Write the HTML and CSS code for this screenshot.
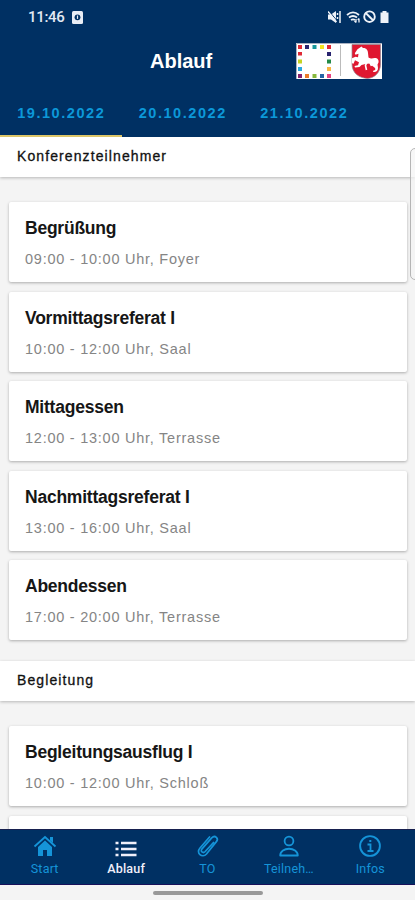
FILE: index.html
```html
<!DOCTYPE html>
<html lang="de">
<head>
<meta charset="utf-8">
<meta name="viewport" content="width=device-width">
<title>Ablauf</title>
<link rel="stylesheet" href="styles.css">
</head>
<body>
<div class="app">
  <header class="header">
    <div class="status">
      <span class="clock">11:46</span>
      <svg class="status-app" width="11" height="13" viewBox="0 0 11 13"><rect width="11" height="13" rx="1.5" fill="#e9edf5"/><circle cx="5.5" cy="6.3" r="2.9" fill="#003063"/><path d="M5.5 4.5v3.4" stroke="#e9edf5" stroke-width="1.2"/></svg>
      <svg class="status-icons" width="62" height="14" viewBox="0 0 62 14" fill="none" stroke="#eef2f8">
        <path d="M0 4.500h3L8 1v12L3 9.500H0z" fill="#eef2f8" stroke="none"/><path d="M1 1l9 11" stroke="#003063" stroke-width="1"/><path d="M0 1.500l8.500 10.500" stroke-width="1.400"/><path d="M9.500 3v2m0 2v2M12 1v12" stroke-width="1.500"/>
        <path d="M19 5c4-3.500 8-3.500 12 0M21 7.500c3-2.300 5-2.300 8 0M23 10c1.500-1 2.500-1 4 0" stroke-width="1.800"/><path d="M28 9v3.500m-1.500-1.500l1.500 1.500M31 12.500V8.500m-1.300 1.300L31 8.500" stroke-width="1.300"/>
        <circle cx="41.500" cy="6.700" r="5.300" stroke-width="1.900"/><path d="M37.700 3l7.600 7.500" stroke-width="1.900"/>
        <path d="M52.500 2.500h2V1h4v1.500h2V13h-8z" fill="#eef2f8" stroke="none"/>
      </svg>
    </div>
    <div class="titlebar">
      <h1>Ablauf</h1>
      <svg class="logo" width="86" height="36" viewBox="0 0 86 36">
        <rect width="86" height="36" fill="#fff"/><path d="M.5 36V.5H86" fill="none" stroke="#a9b2c2"/>
        <g>
          <path fill="#df2935" d="M2 2h4v4H2zM31 2h4v4h-4zM2 9h4v3.500H2z"/>
          <path fill="#29246f" d="M9 2h4v4H9zM31 9h4v4h-4z"/>
          <path fill="#16969b" d="M16.500 2h4v4h-4z"/><path fill="#f3e51f" d="M24 2h4v4h-4z"/>
          <path fill="#c4d321" d="M2 16.500h4v4H2z"/><path fill="#238a48" d="M31 16.500h4v4h-4z"/>
          <path fill="#27a8df" d="M2 24h4v4H2z"/><path fill="#f8b542" d="M31 24h4v4h-4z"/>
          <path fill="#86216e" d="M2 31h4v4H2z"/><path fill="#eb7b29" d="M9 31h4v4H9z"/><path fill="#86b83c" d="M16.500 31h4v4h-4z"/><path fill="#2564a4" d="M24 31h4v4h-4z"/><path fill="#e64482" d="M31 31h4v4h-4z"/>
        </g>
        <path d="M44.500 2v31" stroke="#bbb"/>
        <path d="M56 1.500h28.500V21c0 8.500-6 14-13 14.500C63 35 56 30 56 21z" fill="#df1730" stroke="#8f8790" stroke-width=".7"/>
        <path d="M65.500 3.500l1.500 1.500c3-.3 5 2 5 5l.5 4.500c2.500 1.500 4 1 6 .5 3-.5 4.500 2 4 4.500l-1 2 .5 3.500c0 3-2 4.500-5 4l.5-1.500c2 0 2.500-2 1-3l-2-1.500-3-2.500-4 .5-4 1-2 2-4.500.5-.5-1.500 3.500-.7 1-3-4-2-1.500 3.500-1.500-.5v-5l3.500-1.500 2.500.5.500-3.500-3 1-.7-1.500 2.700-4z" fill="#fff"/>
        <path d="M71 19l-1.500 3.500 1 4.500M74 20l1.500 3" fill="none" stroke="#fff" stroke-width="1.600"/>
      </svg>
    </div>
    <nav class="tabs">
      <span class="tab active">19.10.2022</span><span class="tab">20.10.2022</span><span class="tab">21.10.2022</span>
    </nav>
  </header>
  <main class="content">
    <h2 class="section">Konferenzteilnehmer</h2>
    <div class="cards">
      <article class="card"><h3>Begrüßung</h3><p>09:00 - 10:00 Uhr, Foyer</p></article>
      <article class="card"><h3>Vormittagsreferat I</h3><p>10:00 - 12:00 Uhr, Saal</p></article>
      <article class="card"><h3>Mittagessen</h3><p>12:00 - 13:00 Uhr, Terrasse</p></article>
      <article class="card"><h3>Nachmittagsreferat I</h3><p>13:00 - 16:00 Uhr, Saal</p></article>
      <article class="card"><h3>Abendessen</h3><p>17:00 - 20:00 Uhr, Terrasse</p></article>
    </div>
    <h2 class="section">Begleitung</h2>
    <div class="cards">
      <article class="card"><h3>Begleitungsausflug I</h3><p>10:00 - 12:00 Uhr, Schloß</p></article>
      <article class="card"></article>
    </div>
    <div class="edge-handle"></div>
  </main>
  <nav class="bottom">
    <div class="item"><svg width="24" height="24" viewBox="0 0 24 24"><path d="M5 13l7-6.500 7 6.500v9h-5v-6h-4v6H5z" fill="currentColor"/><path d="M1.500 12.500L12 3l10.500 9.500" fill="none" stroke="currentColor" stroke-width="1.800"/><path d="M17 3h3v6l-3-2.500z" fill="currentColor"/></svg><span>Start</span></div>
    <div class="item current"><svg width="24" height="24" viewBox="0 0 24 24" fill="none" stroke="currentColor" stroke-width="2.500"><path d="M1.500 9h3m2.500 0h15.500M1.500 15h3m2.500 0h15.500M1.500 21h3m2.500 0h15.500"/></svg><span>Ablauf</span></div>
    <div class="item"><svg width="24" height="24" viewBox="0 0 24 24" fill="none" stroke="currentColor" stroke-width="1.700" stroke-linecap="round"><path d="M17.500 8.500l-8.300 9c-2.300 2.300-5.300-.2-3.200-2.600l9.700-11c3.300-3.300 7.600.4 4.500 4L10.500 20c-4.300 4.500-11-.8-6.500-6L13.500 3"/></svg><span>TO</span></div>
    <div class="item"><svg width="24" height="24" viewBox="0 0 24 24" fill="none" stroke="currentColor" stroke-width="1.800"><circle cx="12" cy="7" r="4.400"/><path d="M3.200 21.500c0-9 17.600-9 17.600 0z" stroke-linejoin="round"/></svg><span>Teilneh…</span></div>
    <div class="item"><svg width="24" height="24" viewBox="0 0 24 24" fill="none" stroke="currentColor" stroke-width="1.900"><circle cx="12" cy="12" r="9.900"/><path d="M9.500 10.500h3V17M9.500 17h6M11.300 7h2" stroke-width="1.800"/></svg><span>Infos</span></div>
  </nav>
  <footer class="gesture"><div class="pill"></div></footer>
</div>
</body>
</html>
```
FILE: styles.css
```css
* { box-sizing: border-box; margin: 0; padding: 0; }
body { font-family: "Liberation Sans", Arial, sans-serif; background: #f4f4f4; }
.app { width: 415px; height: 900px; display: flex; flex-direction: column; overflow: hidden; }
.header { height: 137px; flex: none; background: #003063; display: flex; flex-direction: column; }
.status { height: 34px; flex: none; display: flex; align-items: center; padding: 0 25px 0 28px; }
.clock { font: 500 15px/34px Roboto, sans-serif; color: #e3e9f3; letter-spacing: -0.3px; }
.status-app { margin-left: 7px; }
.status-icons { margin-left: auto; }
.titlebar { height: 55px; flex: none; display: grid; grid-template-columns: 296px 86px; align-items: start; }
.titlebar h1 { font-size: 20px; line-height: 54px; font-weight: bold; color: #fff; padding-left: 150px; }
.logo { margin-top: 9px; }
.tabs { flex: 1; display: flex; border-bottom: 1px solid #65658a; }
.tab { width: 121.500px; height: 48px; padding-left: 17.200px; font-size: 14.500px; line-height: 48px; font-weight: bold; letter-spacing: 1.550px; color: #0c98d9; }
.tab.active { border-bottom: 2px solid #dcc568; }
.content { flex: 1; min-height: 0; overflow: hidden; position: relative; background: #f4f4f4; }
.section { height: 40px; padding-left: 17px; font-size: 14px; line-height: 39px; font-weight: normal; letter-spacing: 1.100px; color: #111; background: #fff; -webkit-text-stroke: 0.300px #111; box-shadow: 0 1px 3px rgba(0,0,0,.25); }
.cards { display: flex; flex-direction: column; gap: 9.600px; padding: 25px 8px 20.600px 9px; }
.card { height: 80px; flex: none; padding: 15px 16px; background: #fff; border-radius: 2px; box-shadow: 0 1px 3px rgba(0,0,0,.3); }
.card h3 { font-size: 17.500px; line-height: 22px; letter-spacing: -0.230px; color: #161616; white-space: nowrap; }
.card p { margin-top: 10px; font-size: 14.500px; line-height: 20px; letter-spacing: 0.750px; color: #858585; white-space: nowrap; }
.edge-handle { position: absolute; top: 11px; right: -8px; width: 13px; height: 132px; border: 1px solid #b5b5b5; border-radius: 5px; background: rgba(244,244,244,.7); }
.bottom { height: 56px; flex: none; display: flex; padding: 0 4px; background: #003063; border-top: 1px solid #17204f; border-bottom: 1px solid #17105a; }
.item { flex: 1; display: flex; flex-direction: column; align-items: center; padding-top: 4px; color: #1594d8; }
.item span { font: 400 12.500px/21px Roboto, sans-serif; letter-spacing: 0.200px; }
.item.current { color: #f0effa; }
.item.current span { font-weight: 500; }
.gesture { height: 15px; flex: none; background: #f4f4f4; display: flex; justify-content: center; padding-top: 6px; }
.pill { width: 110px; height: 4px; border-radius: 2px; background: #999; }
```
